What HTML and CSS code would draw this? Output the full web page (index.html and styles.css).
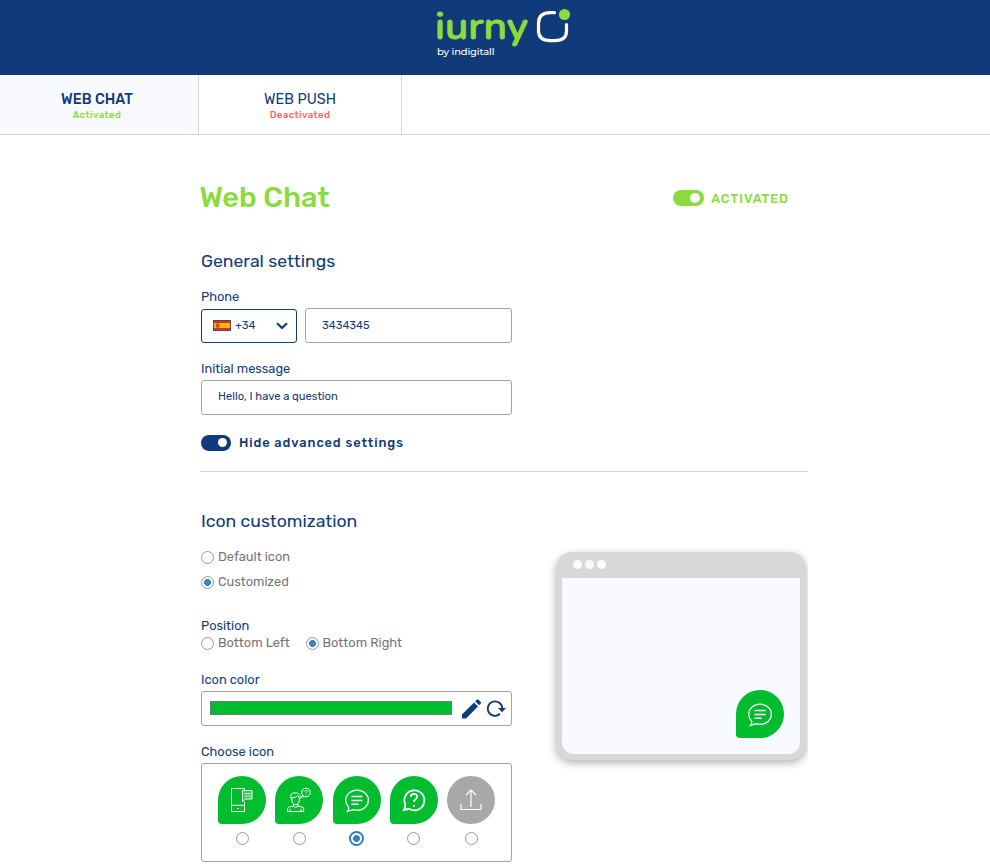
FILE: index.html
```html
<!DOCTYPE html>
<html lang="en">
<head>
<meta charset="utf-8">
<title>iurny settings</title>
<link rel="stylesheet" href="styles.css">
</head>
<body>
<svg class="defs" aria-hidden="true">
  <symbol id="chat" viewBox="0 0 48 48"><path d="M15.7 31.2C13.6 29 12.7 27 12.7 24.3c0-5.700 5-10.100 11.300-10.100s11.400 4.400 11.400 10.100-5.100 10-11.400 10c-1.500 0-2.600-.2-3.600-.6l-5.800 1.700c1-1.200 1.200-2.600 1.100-4.200z" stroke-width="1.300"/><path d="M18.500 20.500h11M18.500 24.500h11M18.500 28.300h7" stroke-width="1.500"/></symbol>
</svg>
<header class="topbar">
  <svg class="logo" width="140" height="54" viewBox="0 0 140 54">
    <text class="brand" x="1" y="33.500" textLength="93" lengthAdjust="spacingAndGlyphs">iurny</text>
    <path class="mark" d="M120.500 7.700h-4Q104.500 7.700 104.500 18.500v7Q104.500 35.700 116.500 35.700h4Q132.500 35.700 132.500 26v-6.500"/>
    <circle cx="130.500" cy="9.500" r="5.600" fill="#8adb3c"/>
    <text class="by" x="3" y="50" textLength="57.500">by indigitall</text>
  </svg>
</header>
<nav class="tabs">
  <a class="tab active"><span class="tab-name">WEB CHAT</span><span class="status on">Activated</span></a>
  <a class="tab"><span class="tab-name">WEB PUSH</span><span class="status off">Deactivated</span></a>
</nav>
<main>
  <div class="title-row">
    <h1>Web Chat</h1>
    <div class="activation"><i class="switch green"></i><span class="act-label">ACTIVATED</span></div>
  </div>
  <section class="general">
    <h2>General settings</h2>
    <label class="t-phone">Phone</label>
    <div class="phone-row">
      <div class="select">
        <svg width="18" height="11" viewBox="0 0 18 11"><path fill="#d03427" d="M0 0h18v11H0z"/><path fill="#f5b51b" d="M1 3h16v5H1z"/><path fill="#b65b25" d="M3 3.500h3.500v4H3z"/><path fill="none" stroke="#79402b" d="M.5.5h17v10H.5z"/></svg>
        <span class="code">+34</span>
        <svg class="chev" width="12" height="8" viewBox="0 0 12 8"><path d="M1 1.200 6 6l5-4.800"/></svg>
      </div>
      <div class="input">3434345</div>
    </div>
    <label class="t-initial">Initial message</label>
    <div class="input wide">Hello, I have a question</div>
    <div class="advanced"><i class="switch"></i><span>Hide advanced settings</span></div>
  </section>
  <section class="custom">
    <div class="form">
      <h2>Icon customization</h2>
      <div class="option first"><i class="radio"></i><span>Default icon</span></div>
      <div class="option"><i class="radio on"></i><span>Customized</span></div>
      <label class="position">Position</label>
      <div class="options"><div class="option"><i class="radio"></i><span>Bottom Left</span></div><div class="option"><i class="radio on"></i><span>Bottom Right</span></div></div>
      <label class="t-color">Icon color</label>
      <div class="color-box">
        <i class="swatch"></i>
        <svg class="pencil" width="20" height="20" viewBox="0 0 20 20"><path d="M0 15.500 12 3.500 16 7.500 4 19.500H0zM13.200 2.300 15.100.4Q15.600 0 16.100.5L18.900 3.200Q19.400 3.700 18.900 4.200L17.100 6.200z"/></svg>
        <svg class="reload" width="19" height="18" viewBox="0 0 19 18"><path d="M13 14.800A7.200 7.200 0 1 1 15.200 9.500" fill="none" stroke="#103a7a" stroke-width="1.900"/><path d="M11 9h8l-4 4.300z" fill="#103a7a"/></svg>
      </div>
      <label class="t-choose">Choose icon</label>
      <div class="icons">
        <div class="choice"><svg class="bubble" viewBox="0 0 48 48"><path d="M24 12.500H13.500v23h13V26M26.500 12.500H24M26.500 12.500v2M13.500 29.300h13M19 32.500h2"/><path fill="#fff" fill-opacity=".2" d="M24.500 14.500h9.500v8.500h-6.500l-3 3z"/><path d="M26.500 17.500h6M26.500 20h6" stroke-opacity=".8"/></svg><i class="radio"></i></div>
        <div class="choice"><svg class="bubble" viewBox="0 0 48 48"><path d="M16.500 23.500c-2-5.500 1-7 3.500-6.500 4-.5 6.500 2 4.500 6.500M17 21.500c3 .3 4.500-.5 5.500-2 .5 1 1 1.500 1.800 2v3c0 5.500-7 5.500-7.300 0zM18.500 28v2.500M23 28v2.500M12.500 35.500v-2.500q0-2 2-2l4-1q2.200 3 4.500 0l4 1q1.700 0 1.700 2v2.500zM15 33v2.500M26 33v2.500"/><circle cx="31" cy="16.500" r="4.300"/><path d="m27.500 19.500-1 1.800 2.500-.8M29.800 15.500c0-1.800 2.700-1.500 2.500 0 0 .8-1.200 1-1.200 1.800M31 18.500v.8"/></svg><i class="radio"></i></div>
        <div class="choice"><svg class="bubble"><use href="#chat"/></svg><i class="radio on focus"></i></div>
        <div class="choice"><svg class="bubble" viewBox="0 0 48 48"><path d="M15.200 28.300A10 10 0 1 1 19 32.800L14 34q1.500-2 1.200-5.700z" stroke-width="1.800"/><path d="M20.800 21c0-4.400 6.500-4 6.300-.2 0 2.200-3.200 2.500-3.200 5.300M23.900 29v1.800" stroke-width="1.900"/></svg><i class="radio"></i></div>
        <div class="choice"><svg class="bubble upload" viewBox="0 0 48 48"><path d="M24 31V14.500M19 19l5-5 5 5M14 28v5.500h20V28" stroke-width="1.200"/></svg><i class="radio"></i></div>
      </div>
    </div>
    <div class="preview">
      <div class="dots"><i></i><i></i><i></i></div>
      <div class="screen"><svg class="bubble"><use href="#chat"/></svg></div>
    </div>
  </section>
</main>
</body>
</html>
```
FILE: styles.css
```css
* { box-sizing: border-box; }
body { margin: 0; height: 866px; overflow: hidden; background: #fff; color: #103a7a; font-family: Rubik, Roboto, sans-serif; font-size: 12.8px; line-height: 16px; }
svg, i { display: block; flex: none; }
.defs { position: absolute; width: 0; height: 0; }
.topbar { height: 75px; background: #103a7a; display: flex; justify-content: center; padding: 5px 0 0 18px; }
.logo { overflow: visible; }
.brand { font: 600 37px Nunito, Lato, sans-serif; fill: #8adb3c; stroke: #8adb3c; stroke-width: .9; stroke-linejoin: round; }
.mark { fill: none; stroke: #fff; stroke-width: 3.200; stroke-linecap: round; }
.by { font: 500 10px Montserrat, Lato, sans-serif; fill: #fff; }
.tabs { display: flex; height: 60px; border-bottom: 1px solid #d7d7d7; }
.tab { width: 203px; border-right: 1px solid #d7d7d7; display: flex; flex-direction: column; align-items: center; padding-top: 16px; }
.tab.active { width: 199px; background: #f9faff; padding-right: 4px; }
.tab-name { font-size: 14.4px; line-height: 18px; }
.active .tab-name { font-weight: 500; }
.status { font-size: 9.6px; line-height: 12px; font-weight: 500; letter-spacing: .4px; }
.status.on { color: #8adb3c; }
.status.off { color: #ff6464; }
main { width: 608px; margin-left: 200px; padding-top: 46px; overflow: hidden; height: 731px; }
h1, h2 { margin: 0; width: max-content; }
h1 { font-size: 28.8px; line-height: 34px; margin: -1px 0 0 -.6px; font-weight: 500; color: #8adb3c; }
h2 { font-size: 17.6px; line-height: 20px; font-weight: 400; }
label { display: block; width: max-content; }
.title-row { display: flex; justify-content: space-between; height: 34px; }
.activation { display: flex; gap: 7px; padding: 9px 19px 0 0; color: #8adb3c; font-weight: 500; letter-spacing: .9px; }
.act-label { margin-top: 1px; }
.switch { width: 30px; height: 16px; border-radius: 8px; background: #103a7a; padding: 3px 4px 0 17px; }
.switch::before { content: ""; display: block; width: 9px; height: 9px; border-radius: 50%; background: #fff; }
.switch.green { width: 31px; background: #8adb3c; padding-top: 3px; }
.switch.green::before { width: 10px; height: 10px; }
.general { margin-top: 36px; height: 221px; border-bottom: 1px solid #d7d7d7; }
.general > * { margin-left: 1px; }
.t-phone { margin-top: 18px; }
.phone-row { display: flex; gap: 8px; align-items: flex-end; margin-top: 3px; }
.select, .input, .color-box, .icons { border: 1px solid #a3a3a3; border-radius: 3px; }
.select { width: 96px; height: 34px; border-color: #103a7a; display: flex; align-items: center; padding: 0 8px 1px 10.500px; font-size: 11.2px; }
.code { margin: 1px 0 0 4.500px; }
.chev { margin-left: auto; fill: none; stroke: #103a7a; stroke-width: 2.200; }
.input { width: 207px; height: 35px; padding: 9px 16px; font-size: 11.2px; }
.input.wide { width: 311px; margin-top: 3px; padding-top: 8px; }
.t-initial { margin-top: 18px; }
.advanced { display: flex; gap: 8px; margin-top: 20px; font-weight: 500; letter-spacing: .9px; }
.custom { display: flex; justify-content: space-between; padding: 39px 2px 0 1px; }
.form { width: 311px; }
.option { display: flex; gap: 4px; color: #757575; margin-top: 9px; height: 16px; }
.option.first { margin-top: 18px; }
.radio { width: 13px; height: 13px; border: 1px solid #999; border-radius: 50%; background: #fff; margin-top: 2px; }
.radio.on { background: radial-gradient(circle, #3584c8 0 3.200px, #fff 3.700px); }
.radio.focus { border: 2px solid #2f7fc1; width: 15px; height: 15px; }
.position { margin-top: 28px; }
.options { display: flex; gap: 15.700px; }
.options .option { margin-top: 1px; }
.t-color { margin-top: 21px; }
.color-box { height: 35px; margin-top: 3px; padding: 0 5px 0 8px; display: flex; align-items: center; }
.swatch { width: 242px; height: 14px; border: 1px solid #777; background: #00bd2f; margin-bottom: 1px; }
.pencil { margin-left: 10px; fill: #103a7a; }
.reload { margin: 0 0 2px 5px; }
.t-choose { margin-top: 18px; }
.icons { height: 99px; margin-top: 3px; display: flex; gap: 9.300px; padding: 12px 16px; }
.choice { display: flex; flex-direction: column; align-items: center; }
.choice .radio { margin-top: 8px; }
.choice .radio.focus { margin-top: 7px; }
.bubble { width: 48px; height: 48px; border-radius: 24px 24px 24px 4px; background: #00bd2f; fill: none; stroke: #fff; stroke-width: 1; }
.upload { background: #a8a8a8; border-radius: 50%; }
.preview { width: 250px; height: 208px; margin-top: 41px; padding: 0 6px 6px; background: #d8d8d8; border-radius: 16px; box-shadow: 0 3px 8px rgba(0,0,0,.3); }
.dots { height: 26px; display: flex; gap: 3px; padding: 8px 11px; }
.dots i { width: 9px; height: 9px; border-radius: 50%; background: #f9faff; }
.screen { height: 176px; background: #f9faff; border-radius: 0 0 12px 12px; display: flex; justify-content: flex-end; align-items: flex-end; padding: 16px; }
```
